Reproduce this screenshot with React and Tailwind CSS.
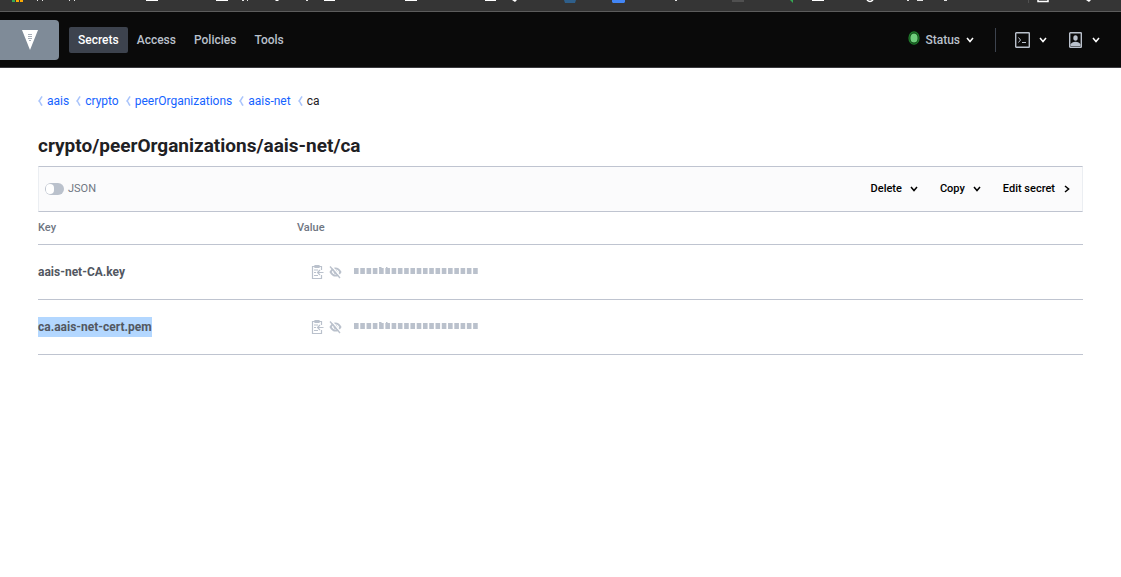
import React from "react";

const rows = ["aais-net-CA.key", "ca.aais-net-cert.pem"];
const crumbs = ["aais", "crypto", "peerOrganizations", "aais-net"];

function Chevron({ className = "" }) {
  return (
    <svg className={className} width="8" height="6" viewBox="0 0 8 6" fill="none" stroke="currentColor" strokeWidth="1.5" aria-hidden="true">
      <path d="M1 1l3 3.6L7 1" />
    </svg>
  );
}

function CrumbMark() {
  return (
    <svg width="5" height="10" viewBox="0 0 5 10" fill="none" stroke="#a9c4fb" strokeWidth="1.5" aria-hidden="true">
      <path d="M4.3 .5C2.6 1.3 2.8 3.6 1 5c1.8 1.4 1.6 3.7 3.3 4.5" />
    </svg>
  );
}

function BookmarksStrip() {
  return (
    <div className="h-3 overflow-hidden border-b border-[#5c5c5c] bg-[#353535]">
      <svg width="1121" height="4" viewBox="0 0 1121 4" aria-hidden="true">
        <path fill="#34a853" d="M12 0h3v2h-3z" />
        <path fill="#fbab04" d="M16 0h3v2h-3zM20 0h3v2h-3z" />
        <path fill="#e4e4e4" d="M37 0h1v1h-1zM42 0h1v1h-1zM69 0h1v1h-1zM74 0h1v1h-1zM242 0h2v1h-2zM247 0h1v1h-1zM306 0h2v1h-2zM675 0h2v1h-2zM907 0h2v1h-2zM917 0h6v1h-6zM944 0h3v1h-3z" />
        <path fill="#fff" d="M146 0h12v1h-12zM216 0h12v1h-12zM324 0h11v1h-11zM405 0h12v1h-12zM485 0h11v1h-11zM812 0h12v1h-12zM275 0h4l-1 1h-2zM512 0h5l-2 2zM1086 0h5l-2 2z" />
        <path stroke="#fff" strokeWidth="1.5" fill="none" d="M867 0q3 3 6 0M1038 0v1.5h10V0" />
        <path fill="#2f5f8a" d="M564 0h12l-1 3h-10z" />
        <path fill="#4285f4" d="M612 0h13v2l-1 1h-11l-1-1z" />
        <path fill="#505050" d="M732 0h12v2h-12zM1028 0h1v3h-1z" />
        <path fill="#34a853" d="M790 0h3v3z" />
      </svg>
    </div>
  );
}

function TopNav() {
  const link = "flex h-[26px] items-center rounded-xs px-[9px] text-[#bac1cc]";
  return (
    <header className="flex h-14 items-center border-b border-[#3a3a3e] bg-[#0a0a0a] text-xs font-medium">
      <a href="#home" aria-label="Vault home" className="flex h-10 w-[59px] items-center justify-center rounded-r-sm bg-[#7f8b98]">
        <svg width="16" height="20" viewBox="0 0 16 20" aria-hidden="true">
          <path fill="#fff" d="M0 0h16L8 20z" />
          <path fill="#a6aeb8" d="M6 4h4v1H6zM6 6h4v1H6zM6 8h4v1H6zM7 10h2v1H7z" />
        </svg>
      </a>
      <nav className="ml-[10px] flex items-center">
        <a href="#secrets" className="flex h-[26px] items-center rounded-xs bg-[#3d434e] px-[9px] text-white">Secrets</a>
        <a href="#access" className={link}>Access</a>
        <a href="#policies" className={link}>Policies</a>
        <a href="#tools" className={link}>Tools</a>
      </nav>
      <div className="ml-auto flex items-center pr-[21px]">
        <button className="flex items-center text-[#bac1cc]">
          <svg className="mr-[5px] mb-1" width="12" height="14" viewBox="0 0 12 14" aria-hidden="true">
            <ellipse cx="6" cy="7" rx="5" ry="6.2" fill="#0a3a10" stroke="#1f7a2b" strokeWidth="1.3" />
            <ellipse cx="6" cy="7" rx="3.6" ry="4.5" fill="#6fce7c" />
          </svg>
          Status
          <Chevron className="ml-[6px] text-white" />
        </button>
        <span className="mr-[19px] ml-[21px] h-6 w-px bg-[#3d434e]" />
        <button aria-label="Console" className="flex items-center text-[#bac1cc]">
          <svg width="15" height="16" viewBox="0 0 15 16" fill="none" stroke="currentColor" aria-hidden="true">
            <rect x=".7" y=".7" width="13.6" height="14.6" rx=".6" strokeWidth="1.4" />
            <path d="M3.5 5.5l2 2.5-2 2.5M7 10.5h4" />
          </svg>
          <Chevron className="ml-[9px] text-white" />
        </button>
        <button aria-label="User menu" className="ml-[22px] flex items-center text-[#bac1cc]">
          <svg width="13" height="16" viewBox="0 0 13 16" aria-hidden="true">
            <rect x=".7" y=".7" width="11.6" height="14.6" rx=".6" fill="none" stroke="currentColor" strokeWidth="1.4" />
            <ellipse cx="6.5" cy="6" rx="2.2" ry="2.7" fill="currentColor" />
            <path fill="currentColor" d="M1.5 14v-1.5C2.500 10.500 4 9.700 6.500 9.700s4 .8 5 2.800V14z" />
          </svg>
          <Chevron className="ml-[10px] text-white" />
        </button>
      </div>
    </header>
  );
}

function MaskedValue() {
  return (
    <svg width="125" height="9" viewBox="0 0 125 9" fill="#bac1cc" role="img" aria-label="Hidden value">
      {Array.from({ length: 20 }, (_, i) => (
        <rect key={i} x={i * 6.27} y="1" width="4.6" height="6" />
      ))}
      <path d="M25 0h2l1 1h-3zM32 0h1.5v1H32z" />
    </svg>
  );
}

function SecretRow({ name, selected }) {
  return (
    <tr className="border-b border-[#bfc4d0]">
      <th scope="row" className="h-[55px] p-0 text-left text-xs font-bold text-[#525761]">
        <span className={selected ? "bg-[#b3d7ff] py-[3px]" : ""}>{name}</span>
      </th>
      <td className="p-0">
        <div className="flex items-center pl-[14px] text-[#bac1cc]">
          <button aria-label="Copy value">
            <svg width="13" height="16" viewBox="0 0 13 16" fill="none" stroke="currentColor" strokeWidth="1.2" aria-hidden="true">
              <path d="M10.5 6V2.5h-9v12h9V11M12.5 8.500H7M9 6L6.500 8.500 9 11M3 6h4M3 8.500h2M3 11.500h4" />
              <path fill="currentColor" d="M4 1.500h4v2H4z" />
            </svg>
          </button>
          <button aria-label="Show value" className="ml-[5px]">
            <svg width="13" height="14" viewBox="0 0 13 14" fill="none" stroke="currentColor" aria-hidden="true">
              <path strokeWidth="1.8" d="M1.500 7C3 4.300 4.500 3.300 6.500 3.300S10 4.300 11.500 7C10 9.700 8.500 10.700 6.500 10.700S3 9.700 1.500 7z" />
              <ellipse cx="6.500" cy="7" rx="1.500" ry="1.700" fill="currentColor" />
              <path stroke="#fff" strokeWidth="1.200" d="M2.500 1l9.500 11" />
              <path strokeWidth="1.300" d="M1 1.500l10 11.500" />
            </svg>
          </button>
          <span className="ml-3"><MaskedValue /></span>
        </div>
      </td>
    </tr>
  );
}

export default function App() {
  return (
    <div className="min-h-screen bg-white font-[Roboto,sans-serif] text-[#1f2124]">
      <BookmarksStrip />
      <TopNav />
      <main className="px-[38px] pt-6">
        <nav aria-label="Breadcrumb" className="flex h-[18px] items-center gap-[7px] text-xs">
          {crumbs.map((c) => (
            <span key={c} className="flex items-center gap-1">
              <CrumbMark />
              <a href={"#" + c} className="text-[#1563ff]">{c}</a>
            </span>
          ))}
          <span className="flex items-center gap-1"><CrumbMark />ca</span>
        </nav>
        <h1 className="mt-5 text-[19px] leading-[32px] font-bold">crypto/peerOrganizations/aais-net/ca</h1>
        <div className="mt-1 flex h-[46px] items-center border border-x-[#ebeef2] border-y-[#bfc4d0] bg-[#fbfbfc] pr-[11px] pl-[6px] text-[11px]">
          <label className="flex items-center gap-1 text-[#6f7682]">
            <input type="checkbox" className="peer sr-only" />
            <span className="flex h-3 w-[19px] items-center rounded-full bg-[#bac1cc] px-px peer-checked:justify-end">
              <span className="h-[10px] w-2 rounded-full bg-white" />
            </span>
            JSON
          </label>
          <div className="ml-auto flex items-center gap-[22px] font-medium text-black">
            <button className="flex items-center gap-2">Delete <Chevron /></button>
            <button className="flex items-center gap-2">Copy <Chevron /></button>
            <button className="flex items-center gap-2">Edit secret <Chevron className="-rotate-90" /></button>
          </div>
        </div>
        <table className="w-full table-fixed border-collapse">
          <thead>
            <tr className="border-b border-[#bfc4d0] text-left text-[11px] text-[#6f7682]">
              <th className="h-8 w-[259px] p-0 font-medium">Key</th>
              <th className="p-0 font-medium">Value</th>
            </tr>
          </thead>
          <tbody>
            {rows.map((name, i) => <SecretRow key={name} name={name} selected={i === 1} />)}
          </tbody>
        </table>
      </main>
    </div>
  );
}
